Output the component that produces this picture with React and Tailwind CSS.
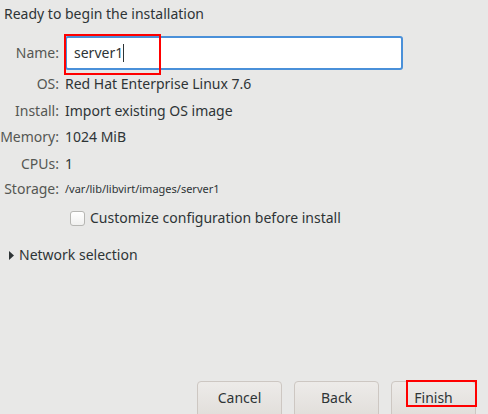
export default function App() {
  const rows = [
    ["OS:", "Red Hat Enterprise Linux 7.6"],
    ["Install:", "Import existing OS image"],
    ["Memory:", "1024 MiB"],
    ["CPUs:", "1"],
  ];
  return (
    <div className="relative w-[488px] h-[414px] overflow-hidden bg-[#e8e8e7] text-[#2e3436] font-['Noto_Sans',sans-serif] text-[14px] flex flex-col">
      <div className="pl-[4px] pt-[5px] leading-[18px]">Ready to begin the installation</div>

      <div className="mt-[13px] grid grid-cols-[59px_1fr] gap-x-[6px] items-center">
        <div className="text-right text-[#555753] leading-[34px]">Name:</div>
        <div className="pr-[85px]">
          <div className="h-[34px] bg-white border-2 border-[#4a90d9] rounded-[3px] flex items-center pl-[7px]">
            <span className="leading-[18px]">server1</span>
            <span className="w-px h-[18px] bg-[#2e3436]"></span>
          </div>
        </div>
        {rows.map(([k, v]) => (
          <div key={k} className="contents">
            <div className="text-right text-[#555753] leading-[25.5px] mt-px">{k}</div>
            <div className="leading-[25.5px] mt-px">{v}</div>
          </div>
        ))}
        <div className="text-right text-[#555753] leading-[26px]">Storage:</div>
        <div className="leading-[26px] text-[11px]">/var/lib/libvirt/images/server1</div>
      </div>

      <div className="mt-[4px] ml-[70px] flex items-center gap-[5px] h-[24px]">
        <div className="w-[15px] h-[15px] rounded-[3px] border border-[#b6b6b3] bg-gradient-to-b from-[#ffffff] to-[#f0f0ef]"></div>
        <span className="leading-[18px]">Customize configuration before install</span>
      </div>

      <div className="mt-[15px] ml-[9px] flex items-center gap-[5px] h-[20px]">
        <svg width="5" height="9" viewBox="0 0 5 9">
          <path d="M0 0 L5 4.5 L0 9 Z" fill="#2e3436" />
        </svg>
        <span className="leading-[18px]">Network selection</span>
      </div>

      <div className="mt-auto flex justify-end gap-[12px] pr-[12px] mb-[-4px]">
        {["Cancel", "Back", "Finish"].map((b) => (
          <button
            key={b}
            className="w-[85px] h-[37px] rounded-[4px] border border-[#cdc7c2] bg-gradient-to-b from-[#edebe9] to-[#e1deda] text-[#2e3436] text-[14px] pb-[4px]"
          >
            {b}
          </button>
        ))}
      </div>

      <div className="absolute left-[64px] top-[34px] w-[97px] h-[41px] border-2 border-[#ff0000]"></div>
      <div className="absolute left-[406px] top-[380px] w-[71px] h-[27px] border-2 border-[#ff0000]"></div>
    </div>
  );
}
